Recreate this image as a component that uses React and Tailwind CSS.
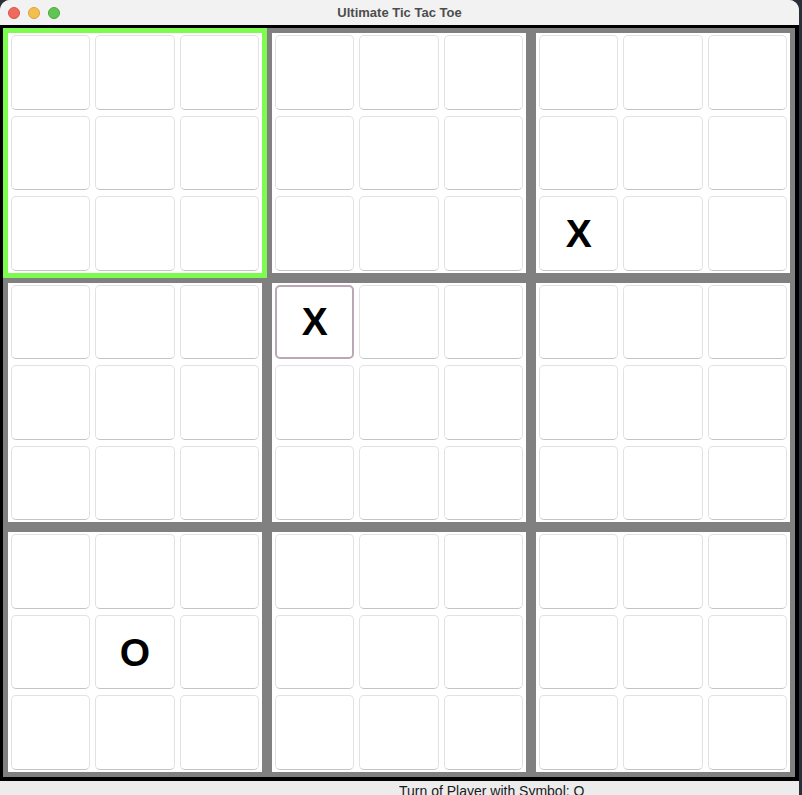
import React from "react";

// board index -> { cell index: mark }
const marks = {
  2: { 6: "X" },
  4: { 0: "X" },
  6: { 4: "O" },
};

const activeBoard = 0;
const lastMove = { board: 4, cell: 0 };

const Cell = ({ mark, highlighted }) => {
  return (
    <div
      className={
        highlighted
          ? "flex items-center justify-center rounded-[5px] border-2 border-[#baa9b4] bg-white"
          : "flex items-center justify-center rounded-[5px] border border-[#e2e2e2] border-b-[#c4c4c4] bg-white"
      }
    >
      {mark && (
        <span className="text-[39px] font-bold leading-none text-black [font-family:'Liberation_Sans',Arial,sans-serif]">
          {mark}
        </span>
      )}
    </div>
  );
};

const Board = ({ index }) => {
  const boardMarks = marks[index] || {};
  return (
    <div
      className={
        index === activeBoard
          ? "grid grid-cols-3 grid-rows-3 gap-x-[5px] gap-y-[6px] border-[5px] border-[#7dfb4e] bg-white px-[3px] py-[2px]"
          : "grid grid-cols-3 grid-rows-3 gap-x-[5px] gap-y-[6px] border-[5px] border-[#808080] bg-white px-[3px] py-[2px]"
      }
    >
      {Array.from({ length: 9 }).map((_, c) => (
        <Cell
          key={c}
          mark={boardMarks[c]}
          highlighted={lastMove.board === index && lastMove.cell === c}
        />
      ))}
    </div>
  );
};

const App = () => {
  return (
    <div className="flex h-[795px] w-[802px] overflow-hidden bg-[#2b2f38]">
      <div className="flex h-[795px] w-[799px] shrink-0 flex-col overflow-hidden rounded-t-[10px] bg-[#ececec] [font-family:'Liberation_Sans',Arial,sans-serif]">
        {/* title bar */}
        <div className="grid h-[25px] shrink-0 grid-cols-[1fr_auto_1fr] items-center bg-[#f2f2f2]">
          <div className="flex items-center gap-[8px] pl-[8px] pt-[1px]">
            <span className="h-[12px] w-[12px] rounded-full border border-[#d9544a] bg-[#ee6a5f]" />
            <span className="h-[12px] w-[12px] rounded-full border border-[#d9a23c] bg-[#f5bf4f]" />
            <span className="h-[12px] w-[12px] rounded-full border border-[#4aa83d] bg-[#61c554]" />
          </div>
          <div className="text-[13px] font-bold text-[#4d4d4d]">Ultimate Tic Tac Toe</div>
          <div />
        </div>

        {/* game panel */}
        <div className="grid h-[756px] shrink-0 grid-cols-3 grid-rows-3 border-t-[3px] border-r-[4px] border-b-[4px] border-l-[3px] border-black bg-[#808080]">
          {Array.from({ length: 9 }).map((_, b) => (
            <Board key={b} index={b} />
          ))}
        </div>

        {/* status */}
        <div className="h-[20px] shrink-0 bg-[#ececec] pl-[399px] pt-[2px] text-[14px] leading-[16px] text-[#1a1a1a]">
          Turn of Player with Symbol: O
        </div>
      </div>
    </div>
  );
};

export default App;
